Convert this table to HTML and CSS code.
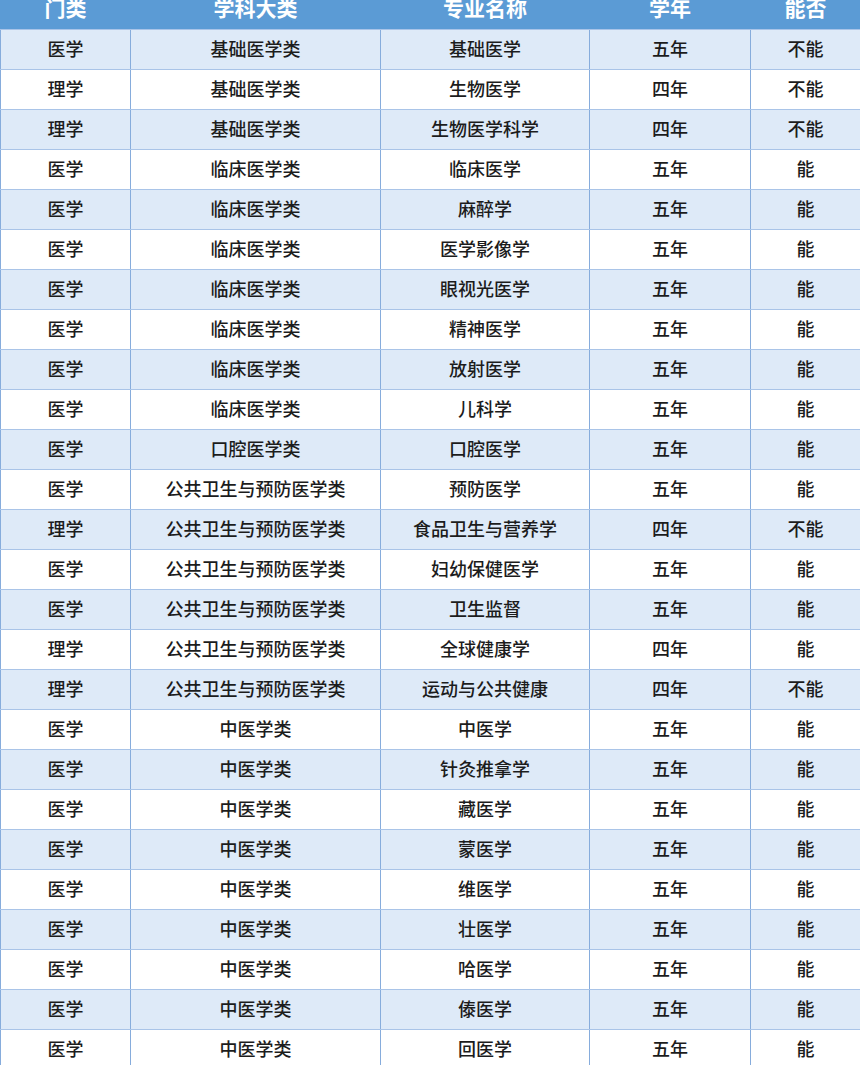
FILE: index.html
```html
<!DOCTYPE html>
<html lang="zh-CN">
<head>
<meta charset="utf-8">
<link rel="stylesheet" href="styles.css">
</head>
<body>
<div class="frame">
<table class="majors">
<colgroup>
<col class="c1"><col class="c2"><col class="c3"><col class="c4"><col class="c5">
</colgroup>
<thead>
<tr><th>门类</th><th>学科大类</th><th>专业名称</th><th>学年</th><th>能否</th></tr>
</thead>
<tbody>
<tr><td>医学</td><td>基础医学类</td><td>基础医学</td><td>五年</td><td>不能</td></tr>
<tr><td>理学</td><td>基础医学类</td><td>生物医学</td><td>四年</td><td>不能</td></tr>
<tr><td>理学</td><td>基础医学类</td><td>生物医学科学</td><td>四年</td><td>不能</td></tr>
<tr><td>医学</td><td>临床医学类</td><td>临床医学</td><td>五年</td><td>能</td></tr>
<tr><td>医学</td><td>临床医学类</td><td>麻醉学</td><td>五年</td><td>能</td></tr>
<tr><td>医学</td><td>临床医学类</td><td>医学影像学</td><td>五年</td><td>能</td></tr>
<tr><td>医学</td><td>临床医学类</td><td>眼视光医学</td><td>五年</td><td>能</td></tr>
<tr><td>医学</td><td>临床医学类</td><td>精神医学</td><td>五年</td><td>能</td></tr>
<tr><td>医学</td><td>临床医学类</td><td>放射医学</td><td>五年</td><td>能</td></tr>
<tr><td>医学</td><td>临床医学类</td><td>儿科学</td><td>五年</td><td>能</td></tr>
<tr><td>医学</td><td>口腔医学类</td><td>口腔医学</td><td>五年</td><td>能</td></tr>
<tr><td>医学</td><td>公共卫生与预防医学类</td><td>预防医学</td><td>五年</td><td>能</td></tr>
<tr><td>理学</td><td>公共卫生与预防医学类</td><td>食品卫生与营养学</td><td>四年</td><td>不能</td></tr>
<tr><td>医学</td><td>公共卫生与预防医学类</td><td>妇幼保健医学</td><td>五年</td><td>能</td></tr>
<tr><td>医学</td><td>公共卫生与预防医学类</td><td>卫生监督</td><td>五年</td><td>能</td></tr>
<tr><td>理学</td><td>公共卫生与预防医学类</td><td>全球健康学</td><td>四年</td><td>能</td></tr>
<tr><td>理学</td><td>公共卫生与预防医学类</td><td>运动与公共健康</td><td>四年</td><td>不能</td></tr>
<tr><td>医学</td><td>中医学类</td><td>中医学</td><td>五年</td><td>能</td></tr>
<tr><td>医学</td><td>中医学类</td><td>针灸推拿学</td><td>五年</td><td>能</td></tr>
<tr><td>医学</td><td>中医学类</td><td>藏医学</td><td>五年</td><td>能</td></tr>
<tr><td>医学</td><td>中医学类</td><td>蒙医学</td><td>五年</td><td>能</td></tr>
<tr><td>医学</td><td>中医学类</td><td>维医学</td><td>五年</td><td>能</td></tr>
<tr><td>医学</td><td>中医学类</td><td>壮医学</td><td>五年</td><td>能</td></tr>
<tr><td>医学</td><td>中医学类</td><td>哈医学</td><td>五年</td><td>能</td></tr>
<tr><td>医学</td><td>中医学类</td><td>傣医学</td><td>五年</td><td>能</td></tr>
<tr><td>医学</td><td>中医学类</td><td>回医学</td><td>五年</td><td>能</td></tr>
</tbody>
</table>
</div>
</body>
</html>
```

FILE: styles.css
```css
html, body {
  margin: 0;
  padding: 0;
  background: #ffffff;
}
.frame {
  width: 860px;
  height: 1065px;
  overflow: hidden;
}
.majors {
  margin-top: -11px;
  width: 860px;
  border-collapse: collapse;
  table-layout: fixed;
  font-family: "Noto Sans CJK SC", "Noto Sans", sans-serif;
}
.c1 { width: 130px; }
.c2 { width: 250px; }
.c3 { width: 209px; }
.c4 { width: 161px; }
.c5 { width: 110px; }
.majors th {
  height: 40px;
  padding: 0 0 4px 0;
  background: #5b9bd5;
  color: #ffffff;
  font-size: 21px;
  font-weight: 700;
  line-height: 1;
  text-align: center;
  border: 1px solid #5b9bd5;
  border-bottom: 1px solid #a9c4e8;
  box-sizing: border-box;
}
.majors td {
  height: 40px;
  padding: 0 0 4px 0;
  font-size: 18px;
  font-weight: 500;
  color: #1c1c1c;
  text-align: center;
  border-top: 1px solid #a9c4e8;
  border-bottom: 1px solid #a9c4e8;
  border-left: 1px solid #86acdc;
  border-right: 1px solid #86acdc;
  box-sizing: border-box;
  line-height: 1;
}
.majors tbody tr:nth-child(odd) td {
  background: #deeaf8;
}
.majors tbody tr:nth-child(even) td {
  background: #ffffff;
}
```
